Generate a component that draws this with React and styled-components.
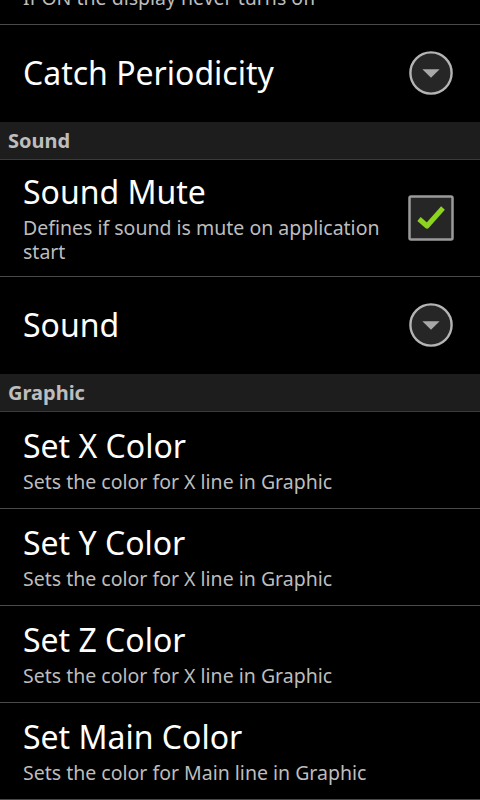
import React from "react";
import styled, { createGlobalStyle } from "styled-components";

const GlobalStyle = createGlobalStyle`
  html, body {
    margin: 0;
    padding: 0;
    background: #000;
  }
  body {
    font-family: "Noto Sans", "Open Sans", "DejaVu Sans", sans-serif;
    color: #fff;
    width: 480px;
    height: 800px;
    overflow: hidden;
  }
`;

const Screen = styled.div`
  width: 480px;
  height: 800px;
  background: #000;
  display: flex;
  flex-direction: column;
  overflow: hidden;
`;

// the list is scrolled, so only the bottom of the first summary shows
const ClippedRow = styled.div`
  height: 25px;
  flex-shrink: 0;
  overflow: hidden;
  display: flex;
  flex-direction: column;
  justify-content: flex-end;
  padding: 0 24px 14px 23px;
  box-sizing: border-box;
  border-bottom: 1px solid #4a4a4a;
`;

const Row = styled.div`
  display: flex;
  align-items: center;
  flex-shrink: 0;
  min-height: 97px;
  box-sizing: border-box;
  padding: 12px 26px 12px 23px;
  border-bottom: 1px solid ${(p) => (p.$noLine ? "#000" : "#4a4a4a")};
`;

const TextCol = styled.div`
  flex: 1;
  min-width: 0;
  display: flex;
  flex-direction: column;
`;

const Title = styled.div`
  font-size: 32px;
  line-height: 40px;
  color: #fff;
`;

const Summary = styled.div`
  font-size: 19.5px;
  line-height: 24px;
  color: #bdbdbd;
  padding-top: ${(p) => (p.$flush ? "0" : "4px")};
  padding-right: ${(p) => (p.$flush ? "0" : "10px")};
  white-space: ${(p) => (p.$flush ? "nowrap" : "normal")};
`;

const Header = styled.div`
  flex-shrink: 0;
  height: 38px;
  box-sizing: border-box;
  padding-left: 8px;
  display: flex;
  align-items: center;
  background: #1d1d1d;
  border-bottom: 1px solid #3a3a3a;
  font-size: 20px;
  font-weight: 700;
  color: #bdbdbd;
`;

const Widget = styled.div`
  width: 46px;
  display: flex;
  justify-content: center;
  align-items: center;
  flex-shrink: 0;
`;

const DropDown = () => (
  <svg width="48" height="48" viewBox="0 0 48 48">
    <circle cx="24" cy="24" r="21.5" fill="#262626" stroke="#b4b4b4" strokeWidth="2.5" />
    <path d="M15 20 L33 20 L24 29 Z" fill="#a8a8a8" />
  </svg>
);

const CheckBox = () => (
  <svg width="46" height="46" viewBox="0 0 46 46">
    <rect x="1.5" y="1.5" width="43" height="43" rx="1.5" fill="#262626" stroke="#9a9a9a" strokeWidth="2.5" />
    <path d="M11 24 L19 31 L35 13" fill="none" stroke="#8dd41e" strokeWidth="5" strokeLinejoin="round" />
  </svg>
);

const colorItems = [
  { title: "Set X Color", summary: "Sets the color for X line in Graphic" },
  { title: "Set Y Color", summary: "Sets the color for X line in Graphic" },
  { title: "Set Z Color", summary: "Sets the color for X line in Graphic" },
  { title: "Set Main Color", summary: "Sets the color for Main line in Graphic" },
];

export default function App() {
  return (
    <>
      <GlobalStyle />
      <Screen>
        <ClippedRow>
          <Summary $flush>If ON the display never turns off</Summary>
        </ClippedRow>

        <Row $noLine>
          <TextCol>
            <Title>Catch Periodicity</Title>
          </TextCol>
          <Widget>
            <DropDown />
          </Widget>
        </Row>

        <Header>Sound</Header>
        <Row>
          <TextCol>
            <Title>Sound Mute</Title>
            <Summary>Defines if sound is mute on application start</Summary>
          </TextCol>
          <Widget>
            <CheckBox />
          </Widget>
        </Row>
        <Row $noLine>
          <TextCol>
            <Title>Sound</Title>
          </TextCol>
          <Widget>
            <DropDown />
          </Widget>
        </Row>

        <Header>Graphic</Header>
        {colorItems.map((item) => (
          <Row key={item.title}>
            <TextCol>
              <Title>{item.title}</Title>
              <Summary>{item.summary}</Summary>
            </TextCol>
          </Row>
        ))}
      </Screen>
    </>
  );
}
